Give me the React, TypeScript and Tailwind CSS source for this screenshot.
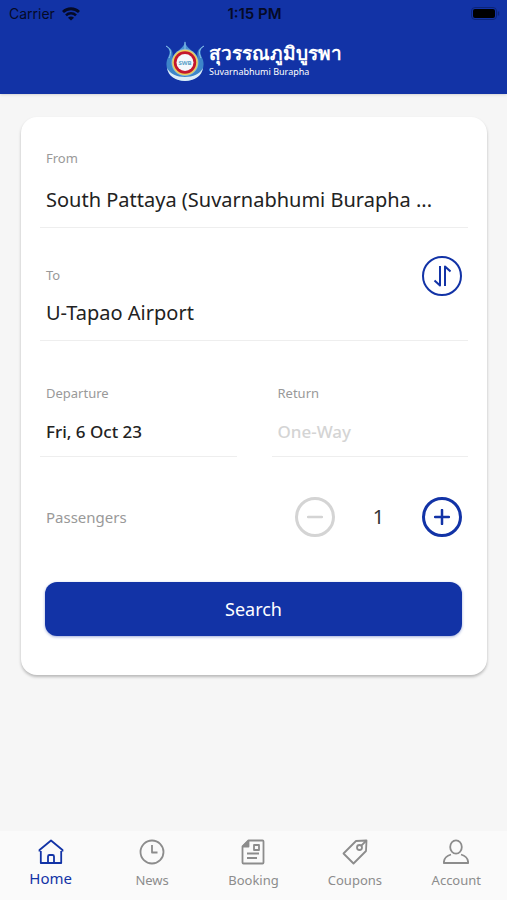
import { useState } from 'react'
import type { ReactNode } from 'react'

type FieldProps = {
  label: string
  value: string
  className?: string
  valueClassName: string
}

function Field({ label, value, className = '', valueClassName }: FieldProps) {
  return (
    <button type="button" className={`flex min-w-0 flex-col text-left ${className}`}>
      <span className="text-[13px] leading-5 text-[#999999]">{label}</span>
      <span className={`max-w-full truncate ${valueClassName}`}>{value}</span>
    </button>
  )
}

function Logo() {
  return (
    <svg viewBox="0 0 40 42" className="h-[42px] w-10" aria-hidden="true">
      <path
        d="M1 6 C7 11 4 15 2 20 C-1 31 8 41 20 41 C32 41 41 31 38 20 C36 15 33 11 39 6 C31 9 32 15 33 20 L7 20 C8 15 9 9 1 6Z"
        fill="#3d86c9"
      />
      <path d="M20 0 C20 8 14 8 11 14 L29 14 C26 8 20 8 20 0Z" fill="#4a93d3" />
      <path d="M20 2 V10 M1 6 C7 9 6 14 4 18 M39 6 C33 9 34 14 36 18" fill="none" stroke="#8fc4ec" strokeWidth="1" />
      <path d="M2 28 C5 34 12 37 20 37 C28 37 35 34 38 28 C37 36 29 41 20 41 C11 41 3 36 2 28Z" fill="#dcecf8" />
      <circle cx="20" cy="22.500" r="13.500" fill="#8cb9d6" />
      <circle cx="20" cy="22.500" r="12.700" fill="#e9cf5c" />
      <circle cx="20" cy="22.500" r="11.200" fill="#c4162c" />
      <circle cx="20" cy="22.500" r="8.500" fill="#f4f8fb" />
      <text x="20" y="25" textAnchor="middle" fontSize="6" fontWeight="700" fill="#5aa0c8">
        SWB
      </text>
    </svg>
  )
}

function StatusBar() {
  return (
    <div className="grid h-7 grid-cols-3 items-center pl-[9px] pr-[7px] font-['Inter',sans-serif] text-sm text-[#050a26]">
      <div className="flex items-center gap-[7px]">
        <span>Carrier</span>
        <svg viewBox="0 0 18 14" className="h-[14px] w-[18px]" aria-hidden="true">
          <path d="M1 5 A11.500 11.500 0 0 1 17 5" fill="none" stroke="currentColor" strokeWidth="2.800" />
          <path d="M4 8.400 A7 7 0 0 1 14 8.400" fill="none" stroke="currentColor" strokeWidth="2.500" />
          <path d="M9 13.500 L6 10.700 A4.200 4.200 0 0 1 12 10.700Z" fill="currentColor" />
        </svg>
      </div>
      <span className="text-center text-[15px] font-semibold">1:15 PM</span>
      <svg viewBox="0 0 29 14" className="h-[14px] w-[29px] justify-self-end" aria-hidden="true">
        <rect x="0.500" y="0.500" width="25" height="12" rx="3.500" fill="none" stroke="#0c2478" />
        <rect x="2" y="2" width="22" height="9" rx="2" fill="#000000" />
        <path d="M27.500 4.500 V8.500" stroke="#0c2478" strokeWidth="1.500" />
      </svg>
    </div>
  )
}

const icons: Record<string, ReactNode> = {
  Home: (
    <>
      <path d="M1.500 12.500 V11 L13 1.500 L24.500 11 V12.500 M2.800 12 V24 H23.200 V12" />
      <path d="M10 24 V17.500 Q10 16 11.500 16 H14.500 Q16 16 16 17.500 V24" />
    </>
  ),
  News: (
    <>
      <circle cx="13" cy="13" r="11.500" />
      <path d="M13 6 V13.500 H18.500" />
    </>
  ),
  Booking: (
    <>
      <path d="M8.500 1.500 H22.500 Q23.500 1.500 23.500 2.500 V23.500 Q23.500 24.500 22.500 24.500 H3.500 Q2.500 24.500 2.500 23.500 V7.500Z" />
      <path d="M3 7.500 H8.500 V2Z" fill="currentColor" />
      <rect x="14" y="6" width="5" height="5" />
      <path d="M7 14.500 H19 M7 19 H17" />
    </>
  ),
  Coupons: (
    <>
      <path d="M14 2 L24.500 1.500 L24 12 L11.500 24.500 L1.500 14.500Z" />
      <circle cx="17.500" cy="8.500" r="2.500" />
      <path d="M19.300 6.700 L24.500 1.500" />
    </>
  ),
  Account: (
    <>
      <ellipse cx="13" cy="8" rx="5.800" ry="6.700" />
      <path d="M8 15.500 Q0.800 17.500 0.800 24 H25.200 Q25.200 17.500 18 15.500" />
    </>
  ),
}

function TabBar() {
  return (
    <nav className="grid h-[69px] grid-cols-5 bg-[#fafafa]">
      {Object.entries(icons).map(([name, icon]) => (
        <a
          key={name}
          href={`#${name.toLowerCase()}`}
          className={`flex flex-col items-center pt-2 ${name === 'Home' ? 'text-[15px] leading-[26px] text-[#1233a6]' : 'text-[13px] leading-[30px] text-[#8c8c8c]'}`}
        >
          <svg
            viewBox="0 0 26 26"
            fill="none"
            stroke="currentColor"
            strokeWidth="1.800"
            strokeLinejoin="round"
            className="h-[26px] w-[26px]"
            aria-hidden="true"
          >
            {icon}
          </svg>
          {name}
        </a>
      ))}
    </nav>
  )
}

export default function App() {
  const [from, setFrom] = useState('South Pattaya (Suvarnabhumi Burapha ...')
  const [to, setTo] = useState('U-Tapao Airport')
  const [passengers, setPassengers] = useState(1)

  function swap() {
    setFrom(to)
    setTo(from)
  }

  return (
    <div className="flex min-h-screen flex-col bg-[#f6f6f6] font-['Noto_Sans',sans-serif]">
      <header className="bg-[#1233a6] pb-3 shadow-sm">
        <StatusBar />
        <div className="flex items-center justify-center gap-1 pt-3 text-white">
          <Logo />
          <div className="pb-1">
            <p className="text-[19px] font-semibold leading-[26px]">สุวรรณภูมิบูรพา</p>
            <p className="text-[9px] leading-3">Suvarnabhumi Burapha</p>
          </div>
        </div>
      </header>

      <main className="flex-1 pl-[21px] pr-5 pt-[23px]">
        <form
          onSubmit={(e) => e.preventDefault()}
          className="rounded-2xl bg-white px-[19px] pb-[39px] pt-[31px] shadow-[0_2px_3px_rgba(0,0,0,0.25)]"
        >
          <div className="flex border-b border-[#eeeeee] px-[6px] pb-[13px]">
            <Field label="From" value={from} className="flex-1 gap-[18px]" valueClassName="text-xl leading-7 text-[#222222]" />
          </div>

          <div className="flex items-start border-b border-[#eeeeee] px-[6px] pb-[13px] pt-7">
            <Field label="To" value={to} className="flex-1 gap-[14px] pt-[9px]" valueClassName="text-xl leading-7 text-[#222222]" />
            <button
              type="button"
              aria-label="Swap"
              onClick={swap}
              className="flex size-10 items-center justify-center rounded-full border-2 border-[#1233a6] text-[#1233a6]"
            >
              <svg
                viewBox="0 0 18 22"
                fill="none"
                stroke="currentColor"
                strokeWidth="2"
                strokeLinejoin="round"
                className="h-[22px] w-[18px]"
                aria-hidden="true"
              >
                <path d="M7 1 V20.500 L1.500 15.500 M12 21 V1.500 L17.500 6.500" />
              </svg>
            </button>
          </div>

          <div className="grid grid-cols-2 gap-[35px] pt-[42px]">
            <div className="flex border-b border-[#eeeeee] px-[6px] pb-3">
              <Field label="Departure" value="Fri, 6 Oct 23" className="flex-1 gap-[17px]" valueClassName="text-[17px] font-medium leading-6 text-[#222222]" />
            </div>
            <div className="flex border-b border-[#eeeeee] px-[6px] pb-3">
              <Field label="Return" value="One-Way" className="flex-1 gap-[17px]" valueClassName="text-[17px] font-medium leading-6 text-[#d4d4d4]" />
            </div>
          </div>

          <div className="flex items-center justify-between px-[6px] pt-10">
            <span id="passengers" className="text-[15px] text-[#999999]">Passengers</span>
            <div role="group" aria-labelledby="passengers" className="flex w-[167px] items-center justify-between">
              <button
                type="button"
                aria-label="Remove passenger"
                disabled={passengers === 1}
                onClick={() => setPassengers(passengers - 1)}
                className="flex size-10 items-center justify-center rounded-full border-[3px] border-[#1233a6] text-[#1233a6] disabled:border-[#d4d4d4] disabled:text-[#d4d4d4]"
              >
                <svg viewBox="0 0 16 16" stroke="currentColor" strokeWidth="2.500" strokeLinecap="round" className="size-4" aria-hidden="true">
                  <path d="M1 8 H15" />
                </svg>
              </button>
              <output className="text-xl text-[#333333]">{passengers}</output>
              <button
                type="button"
                aria-label="Add passenger"
                onClick={() => setPassengers(passengers + 1)}
                className="flex size-10 items-center justify-center rounded-full border-[3px] border-[#1233a6] text-[#1233a6]"
              >
                <svg viewBox="0 0 16 16" stroke="currentColor" strokeWidth="2.500" strokeLinecap="round" className="size-4" aria-hidden="true">
                  <path d="M1 8 H15 M8 1 V15" />
                </svg>
              </button>
            </div>
          </div>

          <div className="pl-[5px] pr-[6px] pt-[45px]">
            <button
              type="submit"
              className="h-[54px] w-full rounded-xl bg-[#1233a6] text-lg text-white shadow-[0_1px_3px_rgba(18,51,166,0.4)]"
            >
              Search
            </button>
          </div>
        </form>
      </main>

      <TabBar />
    </div>
  )
}
